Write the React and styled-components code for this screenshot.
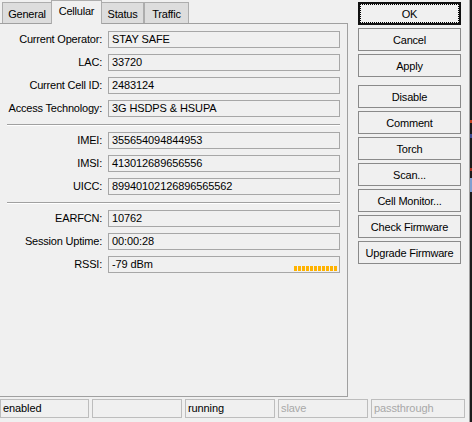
import React from "react";
import styled, { createGlobalStyle, css } from "styled-components";

const Global = createGlobalStyle`
  html, body { margin: 0; padding: 0; background: #f0f0f0; }
  body { font-family: "Liberation Sans", Arial, sans-serif; font-size: 11px; color: #000; }
  * { box-sizing: border-box; }
`;

const Screen = styled.div`
  width: 472px;
  height: 422px;
  display: flex;
  overflow: hidden;
  background: #f0f0f0;
`;

const Window = styled.div`
  width: 470px;
  height: 422px;
  display: flex;
  flex-direction: column;
  border-right: 1px solid #a0a0a0;
  background: #f0f0f0;
`;

const Edge = styled.div`
  flex: 1;
  background: linear-gradient(
    to bottom,
    #1b1b1b 0 120px,
    #c04020 120px 123px,
    #1b1b1b 123px 134px,
    #3a4a90 134px 138px,
    #1b1b1b 138px 168px,
    #a03020 168px 171px,
    #1b1b1b 171px 178px,
    #7f9fd0 178px 192px,
    #1b1b1b 192px
  );
`;

const Body = styled.div`
  height: 397px;
  display: flex;
`;

const TabColumn = styled.div`
  width: 348px;
  display: flex;
  flex-direction: column;
`;

const TabStrip = styled.div`
  height: 24px;
  display: flex;
  align-items: flex-end;
  padding-left: 2px;
  margin-bottom: -1px;
  position: relative;
  z-index: 1;
`;

const Tab = styled.div`
  width: ${(p) => p.$w}px;
  display: flex;
  justify-content: center;
  letter-spacing: -0.2px;
  border: 1px solid #adadad;
  border-bottom: none;
  ${(p) =>
    p.$active
      ? css`
          height: 24px;
          background: #f0f0f0;
          padding-top: 4px;
          margin: 0 -1px;
        `
      : css`
          height: 21px;
          margin-bottom: 1px;
          background: #dddddd;
          padding-top: 5px;
        `}
`;

const Panel = styled.div`
  flex: 1;
  border-top: 1px solid #a0a0a0;
  border-right: 1px solid #a0a0a0;
  border-bottom: 1px solid #a0a0a0;
  padding: 7px 7px 0 0;
  display: flex;
  flex-direction: column;
`;

const Group = styled.div`
  display: grid;
  grid-template-columns: 102px 1fr;
  column-gap: 6px;
  row-gap: 6px;
`;

const Label = styled.div`
  height: 17px;
  line-height: 17px;
  text-align: right;
  white-space: nowrap;
  letter-spacing: -0.2px;
`;

const Field = styled.div`
  height: 17px;
  border: 1px solid #a7a7a7;
  background: #f0f0f0;
  padding: 0 2px 0 3px;
  line-height: 14px;
  display: flex;
  letter-spacing: -0.1px;
`;

const Meter = styled.div`
  margin-left: auto;
  align-self: flex-end;
  margin-bottom: 1px;
  display: flex;
  gap: 1px;
`;

const Segment = styled.span`
  width: 3px;
  height: 5px;
  background: #ffb300;
`;

const Separator = styled.div`
  height: 2px;
  margin: 7px 0 6px 7px;
  border-top: 1px solid #a0a0a0;
  border-bottom: 1px solid #ffffff;
`;

const ButtonColumn = styled.div`
  width: 103px;
  margin-left: 10px;
  padding-top: 2px;
  display: flex;
  flex-direction: column;
  gap: 3px;
`;

const Button = styled.button`
  height: 23px;
  width: 103px;
  padding: 0;
  margin: 0;
  margin-top: ${(p) => (p.$spaced ? "5px" : "0")};
  font-family: "Liberation Sans", Arial, sans-serif;
  font-size: 11px;
  letter-spacing: -0.2px;
  color: #000;
  background: #f0f0f0;
  border: 1px solid #8a8a8a;
  position: relative;
  ${(p) =>
    p.$default &&
    css`
      border: 2px solid #111;
      &::after {
        content: "";
        position: absolute;
        inset: 0;
        border: 1px dotted #000;
      }
    `}
`;

const StatusBar = styled.div`
  margin-top: 2px;
  height: 19px;
  display: grid;
  grid-template-columns: 89px 90px 90px 90px 94px;
  column-gap: 3px;
`;

const StatusCell = styled.div`
  border: 1px solid #bdbdbd;
  padding-left: 2px;
  line-height: 17px;
  letter-spacing: -0.1px;
  color: ${(p) => (p.$dim ? "#a8a8a8" : "#000")};
`;

const tabs = [
  { name: "General", w: 50 },
  { name: "Cellular", w: 51, active: true },
  { name: "Status", w: 43 },
  { name: "Traffic", w: 45 },
];

const groups = [
  [
    ["Current Operator:", "STAY SAFE"],
    ["LAC:", "33720"],
    ["Current Cell ID:", "2483124"],
    ["Access Technology:", "3G HSDPS & HSUPA"],
  ],
  [
    ["IMEI:", "355654094844953"],
    ["IMSI:", "413012689656556"],
    ["UICC:", "89940102126896565562"],
  ],
  [
    ["EARFCN:", "10762"],
    ["Session Uptime:", "00:00:28"],
    ["RSSI:", "-79 dBm", true],
  ],
];

const buttons = [
  { t: "OK", d: true },
  { t: "Cancel" },
  { t: "Apply" },
  { t: "Disable", s: true },
  { t: "Comment" },
  { t: "Torch" },
  { t: "Scan..." },
  { t: "Cell Monitor..." },
  { t: "Check Firmware" },
  { t: "Upgrade Firmware" },
];

const status = [
  { t: "enabled" },
  { t: "" },
  { t: "running" },
  { t: "slave", dim: true },
  { t: "passthrough", dim: true },
];

export default function App() {
  return (
    <>
      <Global />
      <Screen>
        <Window>
          <Body>
            <TabColumn>
              <TabStrip>
                {tabs.map((t) => (
                  <Tab key={t.name} $w={t.w} $active={t.active}>
                    {t.name}
                  </Tab>
                ))}
              </TabStrip>
              <Panel>
                {groups.map((g, gi) => (
                  <React.Fragment key={gi}>
                    {gi > 0 && <Separator />}
                    <Group>
                      {g.map(([label, value, meter]) => (
                        <React.Fragment key={label}>
                          <Label>{label}</Label>
                          <Field>
                            {value}
                            {meter && (
                              <Meter>
                                {Array.from({ length: 11 }).map((_, i) => (
                                  <Segment key={i} />
                                ))}
                              </Meter>
                            )}
                          </Field>
                        </React.Fragment>
                      ))}
                    </Group>
                  </React.Fragment>
                ))}
              </Panel>
            </TabColumn>
            <ButtonColumn>
              {buttons.map((b) => (
                <Button key={b.t} $default={b.d} $spaced={b.s}>
                  {b.t}
                </Button>
              ))}
            </ButtonColumn>
          </Body>
          <StatusBar>
            {status.map((s, i) => (
              <StatusCell key={i} $dim={s.dim}>
                {s.t}
              </StatusCell>
            ))}
          </StatusBar>
        </Window>
        <Edge />
      </Screen>
    </>
  );
}
